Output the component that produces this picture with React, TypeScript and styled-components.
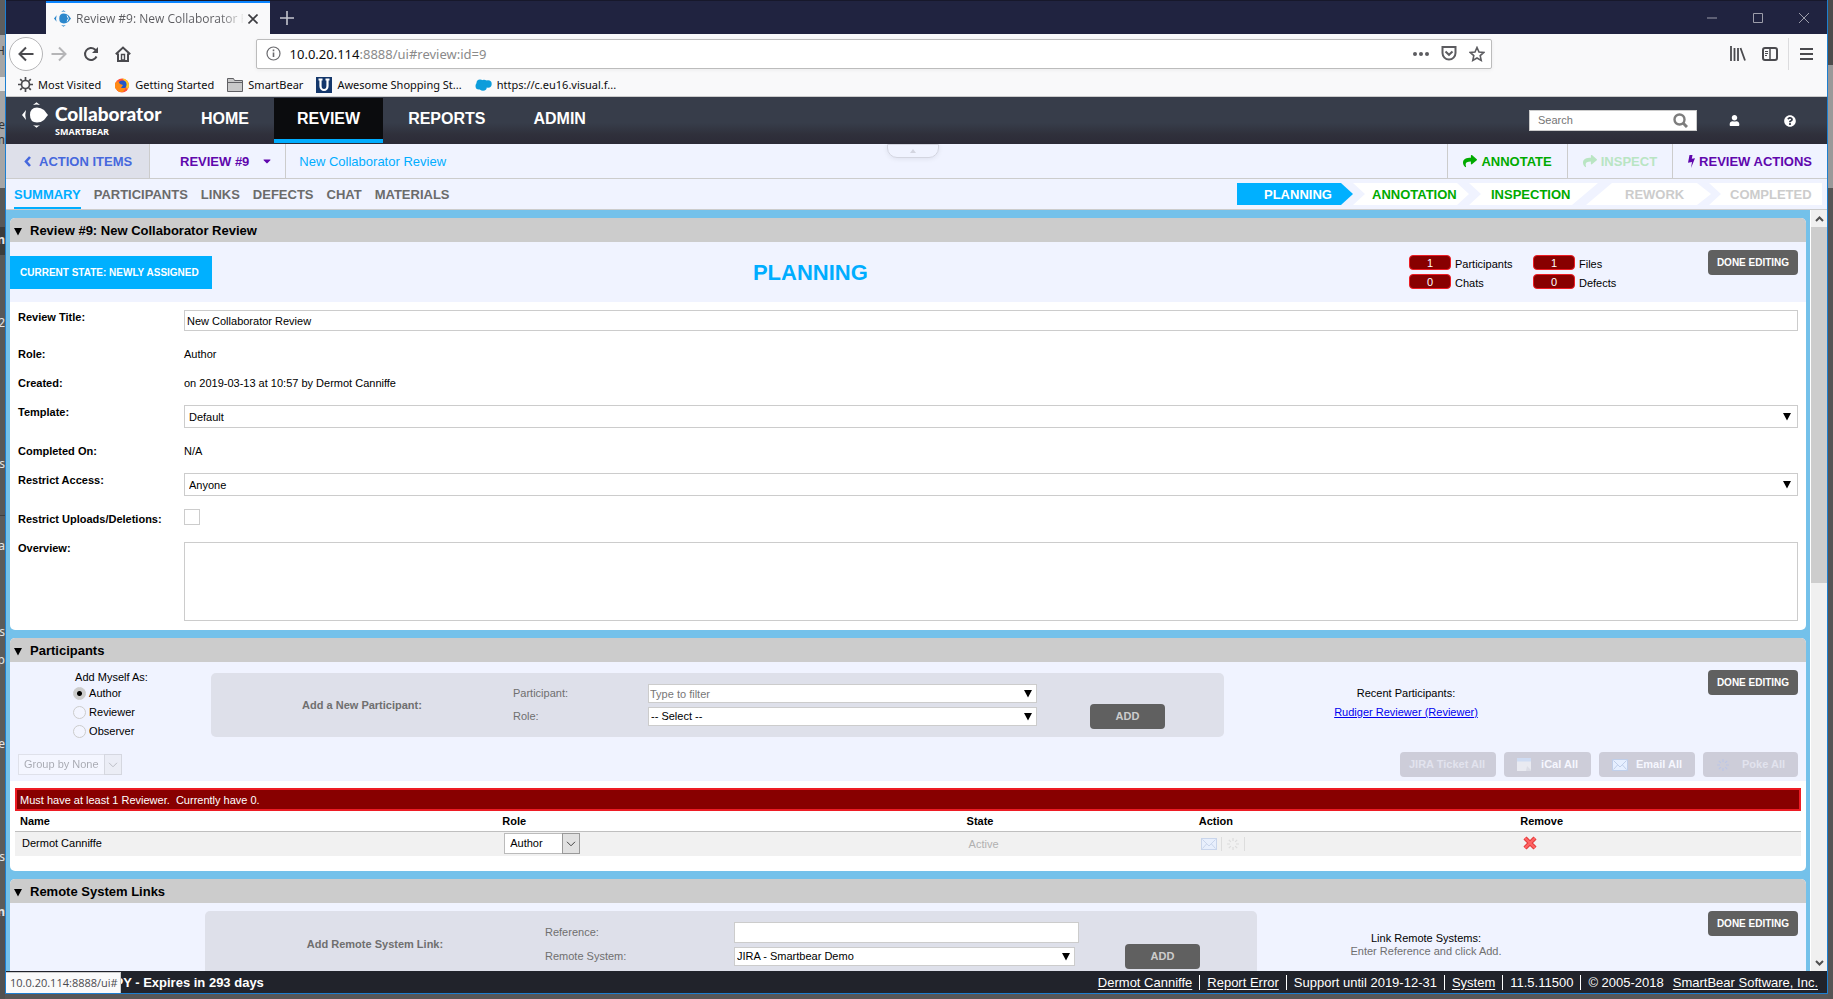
import React from "react";
import styled, { createGlobalStyle, css } from "styled-components";
import { FaShare, FaUser, FaQuestionCircle, FaCaretDown } from "react-icons/fa";

const sans = `"Liberation Sans", Arial, sans-serif`;
const ui = `"Noto Sans", "Open Sans", sans-serif`;

const GlobalStyle = createGlobalStyle`
  * { box-sizing: border-box; }
  body { margin: 0; background: #575757; font: 11px/15px ${sans}; color: #000; }
  button, input, select, textarea { font: inherit; color: inherit; margin: 0; border-radius: 0; }
  h1, h2, h3, p { margin: 0; font-size: inherit; }
  svg { display: block; flex: none; }
`;

/* ---------- desktop and window frame ---------- */

const Desktop = styled.div`
  display: grid;
  grid-template-columns: 5px minmax(0, 1fr) 5px;
  grid-template-rows: minmax(0, 1fr);
  height: 100vh;
  overflow: hidden;
`;

const BackWindow = styled.div`
  position: relative;
  overflow: hidden;
  font: 12px/14px ${ui};
  color: #e4e4e4;
  background: linear-gradient(#5e5e5e 0 35px, #a6a6a6 35px 77px, #e8e8e8 77px 91px, #a6a6a6 91px 188px, #585858 188px 227px, #3c3c3c 227px 255px, #585858 255px 515px, #3f3f3f 515px 516px, #5c5c5c 516px 914px, #444 914px 915px, #515151 915px);
`;

const Fragment = styled.span<{ $dark?: boolean; $bold?: boolean }>`
  position: absolute;
  right: 0;
  white-space: nowrap;
  color: ${(p) => (p.$dark ? "#333" : "#e4e4e4")};
  font-weight: ${(p) => (p.$bold ? 700 : 400)};
`;

const BackEdge = styled.div`
  background: linear-gradient(#4c4c4c 0 65px, #999 65px 188px, #555 188px);
`;

const Window = styled.div`
  display: flex;
  flex-direction: column;
  min-width: 0;
  margin-bottom: 5px;
  border: solid #1d7fd0;
  border-width: 0 1px 1px;
  background: #74c1ea;
  position: relative;
`;

const TabStrip = styled.div`
  display: flex;
  flex: none;
  align-items: stretch;
  height: 34px;
  padding-left: 40px;
  background: #202340;
  border-top: 1px solid #17182b;
`;

const BrowserTab = styled.div`
  display: flex;
  align-items: center;
  gap: 5px;
  width: 224px;
  padding: 0 12px 0 8px;
  background: #f9f9fa;
  border-top: 2px solid #0a84ff;
`;

const TabTitle = styled.span`
  flex: 1;
  overflow: hidden;
  white-space: nowrap;
  font: 12px/18px "Open Sans", sans-serif;
  color: transparent;
  background: linear-gradient(90deg, #5a5a5e 86%, #e8e8e8 100%);
  background-clip: text;
  -webkit-background-clip: text;
`;

const PlainButton = styled.button`
  display: flex;
  align-items: center;
  justify-content: center;
  padding: 0;
  border: 0;
  background: none;
`;

const NewTab = styled(PlainButton)`
  width: 34px;
`;

const WindowButtons = styled.div`
  display: flex;
  margin-left: auto;
`;

const WindowButton = styled(PlainButton)`
  width: 46px;
`;

const NavBar = styled.div`
  display: flex;
  flex: none;
  align-items: center;
  height: 39px;
  padding: 0 3px;
  background: #f9f9fa;
`;

const BackButton = styled(PlainButton)`
  width: 34px;
  height: 34px;
  border: 1px solid #b5b5b7;
  border-radius: 50%;
  background: #fff;
`;

const NavButton = styled(PlainButton)`
  width: 32px;
  height: 32px;
`;

const AddressSide = styled.div`
  flex: 118 1 0;
`;

const AddressBar = styled.div`
  flex: 1235 1 0;
  display: flex;
  align-items: center;
  gap: 9px;
  height: 30px;
  padding: 0 6px 0 9px;
  border: 1px solid #bcbcbc;
  border-radius: 2px;
  background: #fff;
  box-shadow: 0 1px 4px rgba(0, 0, 0, 0.06);
`;

const AddressTools = styled.div`
  display: flex;
  align-items: center;
  gap: 12px;
`;

const Address = styled.span`
  flex: 1;
  font: 13px/18px ${ui};
  color: #8a8a8a;
  b { font-weight: 400; color: #0c0c0d; }
`;

const RightTools = styled.div`
  flex: 336 1 0;
  display: flex;
  justify-content: flex-end;
`;

const MenuButton = styled(NavButton)`
  width: 36px;
  margin-left: 2px;
  border-left: 1px solid #dcdcde;
`;

const Bookmarks = styled.nav`
  display: flex;
  flex: none;
  align-items: center;
  gap: 13px;
  height: 24px;
  padding: 0 12px;
  background: #f9f9fa;
  border-bottom: 1px solid #ccc;
`;

const Bookmark = styled.a`
  display: flex;
  align-items: center;
  gap: 5px;
  font: 11px/18px ${ui};
  color: #0c0c0d;
  text-decoration: none;
`;

/* ---------- application header ---------- */

const Header = styled.header`
  display: flex;
  flex: none;
  align-items: center;
  height: 47px;
  padding-right: 30px;
  background: linear-gradient(#373d4a 55%, #2f303b 80%, #2c2b37);
`;

const Brand = styled.div`
  display: flex;
  align-items: flex-start;
  gap: 7px;
  width: 172px;
  padding-left: 16px;
  color: #fff;
`;

const BrandText = styled.div`
  display: flex;
  flex-direction: column;
  font: 900 19px/20px Lato, sans-serif;
  padding-top: 2px;
`;

const BrandSub = styled.span`
  font: 700 9px/15px "Open Sans", sans-serif;
`;

const MainNav = styled.nav`
  display: flex;
  gap: 2px;
  align-self: stretch;
  padding: 1px 0;
`;

const MainLink = styled.a<{ $active?: boolean }>`
  padding: 0 23px;
  font: 700 16px/41px ${sans};
  color: #fff;
  text-decoration: none;
  border-bottom: 4px solid transparent;
  ${(p) => p.$active && css`background: #0b0c0e; border-color: #00adff;`}
`;

const SearchBox = styled.div`
  display: flex;
  align-items: center;
  width: 168px;
  height: 21px;
  margin-left: auto;
  padding: 0 8px;
  border: 1px solid #ccc;
  background: #fff;
`;

const SearchInput = styled.input`
  flex: 1;
  min-width: 0;
  padding: 0;
  border: 0;
  outline: 0;
  &::placeholder { color: #757575; opacity: 1; }
`;

const HeaderIcon = styled(PlainButton)`
  width: 14px;
  margin-left: 30px;
  color: #fff;
  & + & { margin-left: 42px; }
`;

const ReviewBar = styled.div`
  position: relative;
  display: flex;
  flex: none;
  height: 35px;
  background: #f0f3ff;
  border-bottom: 1px solid #ccc;
  font: 700 13px/35px ${sans};
`;

const ActionItems = styled.a`
  display: flex;
  align-items: center;
  gap: 8px;
  width: 144px;
  padding-left: 18px;
  color: #4668dd;
  background: #dee0ea;
  border-right: 1px solid #ccc;
  text-decoration: none;
`;

const ReviewMenu = styled.button`
  display: flex;
  align-items: center;
  gap: 12px;
  padding: 0 12px 0 30px;
  border: 0;
  border-right: 1px solid #ccc;
  background: none;
  color: #6007ad;
`;

const ReviewName = styled.span`
  padding-left: 13px;
  font-weight: 400;
  color: #00adff;
`;

const Handle = styled(PlainButton)`
  position: absolute;
  top: 0;
  left: 50%;
  width: 52px;
  height: 14px;
  margin-left: -30px;
  border: 1px solid #d3d5e0;
  border-radius: 0 0 10px 10px;
  box-shadow: 0 1px 5px rgba(0, 0, 40, 0.08);
`;

const BarActions = styled.div`
  display: flex;
  margin-left: auto;
`;

const BarAction = styled.button<{ $tone: string }>`
  display: flex;
  align-items: center;
  gap: 4px;
  padding: 0 15px;
  border: 0;
  border-left: 1px solid #ccc;
  background: none;
  color: ${(p) => p.$tone};
`;

const TabsRow = styled.div`
  display: flex;
  flex: none;
  justify-content: space-between;
  height: 31px;
  padding: 0 5px 0 8px;
  background: #f0f3ff;
  border-bottom: 1px solid #ccc;
  font: 700 13px/25px ${sans};
`;

const SectionTabs = styled.nav`
  display: flex;
  gap: 13px;
`;

const SectionTab = styled.a<{ $active?: boolean }>`
  padding-top: 3px;
  color: ${(p) => (p.$active ? "#00adff" : "#6b6b6b")};
  border-bottom: 2px solid ${(p) => (p.$active ? "#00adff" : "transparent")};
  text-decoration: none;
`;

const Steps = styled.ol`
  display: flex;
  margin: 4px 0 0;
  padding: 0;
  list-style: none;
`;

const Step = styled.li<{ $width: number; $pad: number; $bg: string; $fg: string; $shape: string; $overlap?: number }>`
  width: ${(p) => p.$width}px;
  height: 22px;
  margin-left: ${(p) => -(p.$overlap || 0)}px;
  padding-left: ${(p) => p.$pad}px;
  line-height: 23px;
  color: ${(p) => p.$fg};
  background: ${(p) => p.$bg};
  clip-path: polygon(${(p) => p.$shape});
`;

/* ---------- scrolling content ---------- */

const Main = styled.div`
  flex: 1;
  min-height: 0;
  display: flex;
`;

const Panels = styled.main`
  flex: 1;
  min-width: 0;
  display: flex;
  flex-direction: column;
  gap: 8px;
  padding: 8px 4px 0;
  overflow: hidden;
`;

const Panel = styled.section`
  flex: none;
  border-radius: 5px;
  overflow: hidden;
  background: #fff;
`;

const PanelHeader = styled.h2`
  display: flex;
  align-items: center;
  gap: 8px;
  height: 24px;
  padding: 2px 0 0 4px;
  background: #ccc;
  font: 700 13px/22px ${sans};
`;

const ScrollBar = styled.div`
  display: flex;
  flex-direction: column;
  width: 17px;
  background: #f0f0f0;
  border-left: 1px solid #fff;
`;

const ScrollButton = styled(PlainButton)`
  height: 17px;
  flex: none;
`;

const ScrollTrack = styled.div`
  flex: 1;
`;

const ScrollThumb = styled.div`
  height: 49%;
  background: #cdcdcd;
`;

const DarkButton = styled.button<{ $wide?: boolean; $dim?: boolean }>`
  flex: none;
  height: 25px;
  width: ${(p) => (p.$wide ? 90 : 75)}px;
  padding: 0;
  border: 0;
  border-radius: 4px;
  background: #606060;
  color: ${(p) => (p.$dim ? "#ccc" : "#fff")};
  font-size: 10px;
  font-weight: 700;
`;

const SummaryHead = styled.div`
  display: flex;
  align-items: flex-start;
  height: 60px;
  padding: 8px 8px 0 0;
  background: #f0f3ff;
`;

const StateBadge = styled.div`
  margin-top: 6px;
  padding: 0 13px 0 10px;
  background: #00b0ff;
  color: #fff;
  font-size: 10px;
  font-weight: 700;
  line-height: 33px;
`;

const Phase = styled.h3`
  flex: 1;
  margin-top: 6px;
  text-align: center;
  font: 700 22px/33px ${sans};
  color: #00adff;
`;

const Stats = styled.div`
  display: grid;
  grid-template-columns: 124px 175px;
  row-gap: 4px;
  margin-top: 5px;
`;

const Stat = styled.div`
  display: flex;
  gap: 4px;
  height: 15px;
  line-height: 18px;
`;

const StatCount = styled.span`
  width: 42px;
  border: 1px solid #ed1c24;
  border-radius: 4px;
  background: #880000;
  color: #fff;
  text-align: center;
  line-height: 14px;
`;

const Form = styled.div`
  display: grid;
  grid-template-columns: 166px minmax(0, 1fr);
  row-gap: 14px;
  padding: 8px 8px 9px;
`;

const FormLabel = styled.label`
  font-weight: 700;
`;

const FormValue = styled.span``;

const TextInput = styled.input<{ $spaced?: boolean }>`
  width: 100%;
  height: 21px;
  margin-bottom: ${(p) => (p.$spaced ? 2 : 0)}px;
  padding: 0 2px;
  border: 1px solid #ccc;
  background: #fff;
`;

const TextArea = styled.textarea`
  && { margin-top: 1px; }
  display: block;
  width: 100%;
  height: 79px;
  border: 1px solid #ccc;
  resize: none;
`;

const CheckBox = styled.input`
  && { margin: -3px 0 2px; }
  appearance: none;
  width: 16px;
  height: 16px;
  border: 1px solid #ccc;
  background: #fff;
`;

const SelectWrap = styled.div<{ $tall?: boolean; $trim?: boolean }>`
  position: relative;
  height: ${(p) => (p.$tall ? 23 : 19)}px;
  margin-right: ${(p) => (p.$trim ? 4 : 0)}px;
  margin-bottom: ${(p) => (p.$tall ? 2 : 0)}px;
  svg { position: absolute; right: ${(p) => (p.$tall ? 7 : 5)}px; top: ${(p) => (p.$tall ? 7 : 5)}px; pointer-events: none; }
`;

const SelectBox = styled.select<{ $tall?: boolean }>`
  appearance: none;
  display: block;
  width: 100%;
  height: 100%;
  padding: ${(p) => (p.$tall ? "1px 4px 0" : "0 2px")};
  border: 1px solid #ccc;
  background: #fff;
`;

const FilterInput = styled(TextInput)`
  height: 19px;
  display: block;
  padding: 0 1px;
  &::placeholder { color: #777; opacity: 1; }
`;

const ParticipantsHead = styled.div`
  padding: 0 8px 4px 0;
  background: #f0f3ff;
`;

const EditRow = styled.div<{ $cols: string }>`
  display: grid;
  grid-template-columns: ${(p) => p.$cols};
  align-items: start;
  padding-top: 8px;
`;

const RemoteHead = styled.div`
  height: 120px;
  padding-right: 8px;
  background: #f0f3ff;
`;

const RoleChoice = styled.fieldset`
  justify-self: center;
  margin: 0;
  padding: 0;
  border: 0;
`;

const ChoiceTitle = styled.legend`
  padding: 0 0 0 2px;
  line-height: 14px;
`;

const Choice = styled.label`
  display: flex;
  align-items: center;
  gap: 3px;
  height: 19px;
`;

const Radio = styled.input`
  appearance: none;
  width: 13px;
  height: 13px;
  border: 1px solid #ccc;
  border-radius: 50%;
  background: #f3f5ff;
  &:checked { border-color: #ccc; background: radial-gradient(circle, #000 0 2px, #ccc 3px); }
`;

const Inset = styled.div`
  padding-top: 3px;
`;

const AddBox = styled.div<{ $cols: string }>`
  display: grid;
  grid-template-columns: ${(p) => p.$cols};
  padding: 11px 6px 8px 0;
  border-radius: 5px;
  background: #dee0ea;
  color: #6f6f6f;
  ${DarkButton} { place-self: end center; font-size: 11px; }
`;

const AddTitle = styled.h3`
  place-self: center;
  margin-bottom: 3px;
  font-weight: 700;
`;

const AddFields = styled.div<{ $cols: string }>`
  display: grid;
  grid-template-columns: ${(p) => p.$cols};
  align-content: start;
  align-items: center;
  row-gap: 4px;
  margin-bottom: 3px;
  input, select { color: #000; }
`;

const Aside = styled.div<{ $line: number }>`
  padding-top: ${(p) => (p.$line === 19 ? 14 : 21)}px;
  text-align: center;
  line-height: ${(p) => p.$line}px;
  a { color: #0000ee; }
  p + p { color: #6f6f6f; }
`;

const RightCell = styled.div`
  display: flex;
  justify-content: flex-end;
`;

const BulkRow = styled.div`
  display: flex;
  align-items: center;
  gap: 8px;
  padding: 11px 0 0 8px;
`;

const MiniSelectWrap = styled.div<{ $faded?: boolean }>`
  display: inline-block;
  position: relative;
  width: ${(p) => (p.$faded ? 104 : 76)}px;
  height: 21px;
  opacity: ${(p) => (p.$faded ? 0.3 : 1)};
`;

const MiniSelect = styled.select`
  appearance: none;
  display: block;
  width: 100%;
  height: 100%;
  padding: 0 5px;
  border: 1px solid #bbb;
  background: #fff;
  opacity: 1;
`;

const MiniArrow = styled.span`
  position: absolute;
  right: 0;
  top: 0;
  bottom: 0;
  width: 18px;
  display: flex;
  align-items: center;
  justify-content: center;
  border: 1px solid #999;
  background: #e1e1e1;
  pointer-events: none;
`;

const BulkButtons = styled.div`
  display: flex;
  gap: 8px;
  margin-left: auto;
`;

const BulkButton = styled.button<{ $width: number; $bright?: boolean }>`
  display: flex;
  align-items: center;
  justify-content: space-between;
  width: ${(p) => p.$width}px;
  height: 25px;
  padding: 0 ${(p) => (p.$width === 96 && !p.$bright ? 9 : 13)}px;
  border: 0;
  border-radius: 4px;
  background: #cdcdd9;
  color: ${(p) => (p.$bright ? "#f6f7ff" : "#e2e3ee")};
  font-weight: 700;
`;

const TableArea = styled.div`
  padding: 7px 5px 15px;
`;

const Alert = styled.div`
  height: 23px;
  padding: 0 3px;
  border: 2px solid #ed1c24;
  background: #880000;
  color: #fff;
  line-height: 20px;
  white-space: pre;
`;

const Table = styled.table`
  width: 100%;
  table-layout: fixed;
  border-collapse: collapse;
  th { height: 20px; padding: 2px 5px 0; text-align: left; border-bottom: 1px solid #bfbfbf; }
  td { height: 25px; padding: 0 7px; background: #f1f1f1; }
  td > * { vertical-align: middle; }
`;

const Col = styled.col<{ $w: number }>`
  width: ${(p) => p.$w}%;
`;

const Muted = styled.span`
  color: #b0b0b0;
`;

const RowActions = styled.div`
  display: flex;
  align-items: center;
  gap: 4px;
`;

const Divider = styled.i`
  width: 1px;
  height: 14px;
  background: #ddd;
`;

const Footer = styled.footer`
  display: flex;
  flex: none;
  justify-content: space-between;
  height: 22px;
  padding: 0 9px 0 89px;
  background: #21232b;
  color: #fff;
  font: 13px/23px ${sans};
  a { color: #fff; text-underline-offset: 2px; }
`;

const FooterList = styled.div`
  display: flex;
  align-items: center;
  gap: 7px;
  a:last-child { margin-left: 2px; }
`;

const Bar = styled.i`
  width: 1px;
  height: 15px;
  background: #fff;
`;

const StatusTip = styled.div`
  position: absolute;
  left: 0;
  bottom: 0;
  width: 115px;
  padding-left: 4px;
  border: solid #ccc;
  border-width: 1px 1px 0 0;
  background: #fafafa;
  color: #4a4a4f;
  font: 11px/20px "Open Sans", sans-serif;
`;

/* ---------- drawings ---------- */

const Down = () => (
  <svg width="8" height="9" viewBox="0 0 8 9"><path d="M0 1h8L4 8.500z" fill="#000" /></svg>
);
const Chev = () => (
  <svg width="10" height="6" viewBox="0 0 10 6"><path d="M1 .8l4 4 4-4" fill="none" stroke="#444" /></svg>
);
const BearMark = ({ size, fill, hole }: { size: number; fill: string; hole?: string }) => (
  <svg width={size} height={size} viewBox="0 0 26 26">
    <path d="M8 13Q8 5.500 15 5.500q4 0 7 2.500l4 5-4 5q-3 2.500-7 2.500Q8 20.500 8 13z" fill={fill} />
    <path d="M4 8Q2.500 13 4 18L0 13z M11 3L14.500 .3 18 3Q14.500 1.800 11 3z M11 23l3.500 2.700L18 23q-3.500 1.200-7 0z" fill={fill} />
    {hole && <path d="M20 8.500q4 4.500 0 9" fill="none" stroke={hole} strokeWidth="1.500" />}
  </svg>
);
const Envelope = ({ faint }: { faint?: boolean }) => (
  <svg width="16" height="12" viewBox="0 0 16 12" opacity={faint ? 0.8 : 1}>
    <rect x=".5" y=".5" width="15" height="11" fill="#e6efff" stroke="#c0cfea" />
    <path d="M1.500 1.500L8 8l6.500-6.500M1.500 10.500l4-4.500M14.500 10.500l-4-4.500" fill="none" stroke="#c0cfea" />
  </svg>
);
const Spark = ({ color }: { color: string }) => (
  <svg width="14" height="14" viewBox="0 0 14 14" stroke={color} strokeWidth="1.200">
    <path d="M7 1v3M7 10v3M1 7h3M10 7h3M2.800 2.800l2 2M9.200 9.200l2 2M11.200 2.800l-2 2M4.800 9.200l-2 2" />
  </svg>
);
const CalendarIcon = () => (
  <svg width="14" height="13" viewBox="0 0 14 13">
    <path d="M0 0h14v13H0z" fill="#e9eaf1" /><path d="M0 0h14v3.500H0z" fill="#cfdcf3" /><path d="M10 8l4 4v1h-5z" fill="#dcdde6" />
  </svg>
);
const Magnifier = () => (
  <svg width="15" height="15" viewBox="0 0 15 15" fill="none" stroke="#7d7d7d">
    <circle cx="6.500" cy="6.500" r="5" strokeWidth="2.400" /><path d="M10 10l4 4" strokeWidth="3" />
  </svg>
);
const LeftChevron = () => (
  <svg width="7" height="11" viewBox="0 0 7 11"><path d="M6 1L2 5.500 6 10" fill="none" stroke="#4668dd" strokeWidth="2.600" /></svg>
);
const Bolt = () => (
  <svg width="7" height="13" viewBox="0 0 7 13"><path d="M1.500 0h3L3.800 3.800 7 3.200 3 13l1-6L0 7.800z" fill="#6007ad" /></svg>
);
const stroke = { fill: "none", stroke: "#4a4a4e", strokeWidth: 2 } as const;

/* ---------- page ---------- */

const fragments: [number, string, boolean?, boolean?][] = [
  [44, "H", true], [118, "e", true], [133, "m", true], [233, "n", false, true], [316, "2"], [457, "ns"],
  [539, "a"], [625, "ss"], [653, "ep"], [737, "e"], [850, "ns"], [905, "on", false, true],
];

const Choices = ({ id, value, tall, trim }: { id: string; value: string; tall?: boolean; trim?: boolean }) => (
  <SelectWrap $tall={tall} $trim={trim}>
    <SelectBox id={id} $tall={tall}><option>{value}</option></SelectBox>
    <Down />
  </SelectWrap>
);

const SmallSelect = ({ label, value, faded }: { label: string; value: string; faded?: boolean }) => (
  <MiniSelectWrap $faded={faded}>
    <MiniSelect aria-label={label}><option>{value}</option></MiniSelect>
    <MiniArrow><Chev /></MiniArrow>
  </MiniSelectWrap>
);

const Chrome = () => (
  <>
    <TabStrip>
      <BrowserTab>
        <BearMark size={17} fill="#2b87cc" hole="#f9f9fa" />
        <TabTitle>Review #9: New Collaborator Review</TabTitle>
        <PlainButton aria-label="Close tab">
          <svg width="10" height="10" viewBox="0 0 10 10"><path d="M.5.5l9 9M9.500.5l-9 9" stroke="#3c3c40" strokeWidth="1.600" /></svg>
        </PlainButton>
      </BrowserTab>
      <NewTab aria-label="New tab">
        <svg width="14" height="14" viewBox="0 0 14 14"><path d="M7 0v14M0 7h14" stroke="#c4c5ce" strokeWidth="1.600" /></svg>
      </NewTab>
      <WindowButtons>
        <WindowButton aria-label="Minimize"><svg width="10" height="10" viewBox="0 0 10 10"><path d="M0 5h10" stroke="#9c9daa" /></svg></WindowButton>
        <WindowButton aria-label="Maximize"><svg width="10" height="10" viewBox="0 0 10 10"><path d="M.5.5h9v9h-9z" fill="none" stroke="#9c9daa" /></svg></WindowButton>
        <WindowButton aria-label="Close"><svg width="10" height="10" viewBox="0 0 10 10"><path d="M0 0l10 10M10 0L0 10" stroke="#9c9daa" /></svg></WindowButton>
      </WindowButtons>
    </TabStrip>
    <NavBar>
      <BackButton aria-label="Back"><svg width="16" height="16" viewBox="0 0 16 16" {...stroke}><path d="M15.500 8H2M8 1.500L1.500 8 8 14.500" /></svg></BackButton>
      <NavButton aria-label="Forward"><svg width="16" height="16" viewBox="0 0 16 16" {...stroke} stroke="#b5b5b7"><path d="M.5 8H14M8 1.500L14.500 8 8 14.500" /></svg></NavButton>
      <NavButton aria-label="Reload">
        <svg width="16" height="16" viewBox="0 0 16 16" {...stroke}><path d="M13.500 10.500A6 6 0 1 1 12 3.500l1.500 1.500" /><path d="M15 1v6H9z" fill="#4a4a4e" stroke="none" /></svg>
      </NavButton>
      <NavButton aria-label="Home">
        <svg width="16" height="16" viewBox="0 0 16 16" {...stroke}><path d="M.8 8.200L8 1.500l7.200 6.700M3 7.500V15h10V7.500" /><path d="M6.500 8.500h3V14h-3z" strokeWidth="1.400" /></svg>
      </NavButton>
      <AddressSide />
      <AddressBar>
        <svg width="15" height="15" viewBox="0 0 15 15"><circle cx="7.500" cy="7.500" r="6.500" fill="none" stroke="#6a6a6e" strokeWidth="1.200" /><path d="M7.500 6.500V11M7.500 3.600v1.700" stroke="#6a6a6e" strokeWidth="1.600" /></svg>
        <Address><b>10.0.20.114</b>:8888/ui#review:id=9</Address>
        <AddressTools>
          <svg width="16" height="4" viewBox="0 0 16 4" fill="#5c5c60"><circle cx="2" cy="2" r="2" /><circle cx="8" cy="2" r="2" /><circle cx="14" cy="2" r="2" /></svg>
          <svg width="16" height="15" viewBox="0 0 16 15" {...stroke} stroke="#5c5c60"><path d="M1.500 1h13v6a6.500 6.500 0 0 1-13 0z" /><path d="M4.500 5.500L8 8.800l3.500-3.300" /></svg>
          <svg width="16" height="16" viewBox="0 0 16 16" {...stroke} stroke="#5c5c60" strokeWidth="1.600"><path d="M8 1.500l2 4.500 4.800.4-3.600 3.200 1 4.800L8 12l-4.200 2.400 1-4.800L1.200 6.400 6 6z" /></svg>
        </AddressTools>
      </AddressBar>
      <RightTools>
        <NavButton aria-label="Library"><svg width="16" height="15" viewBox="0 0 16 15" {...stroke} strokeWidth="1.800"><path d="M1 0v15M4.500 2v13M8 2v13M10.500 2L15 14.500" /></svg></NavButton>
        <NavButton aria-label="Sidebars"><svg width="16" height="14" viewBox="0 0 16 14" {...stroke}><rect x="1" y="1" width="14" height="12" rx="2" /><path d="M8 1v12" strokeWidth="1.500" /><path d="M3 4.500h3M3 6.500h3M3 8.500h2" strokeWidth="1" /></svg></NavButton>
        <MenuButton aria-label="Menu"><svg width="13" height="12" viewBox="0 0 13 12" {...stroke}><path d="M0 1h13M0 6h13M0 11h13" /></svg></MenuButton>
      </RightTools>
    </NavBar>
    <Bookmarks>
      <Bookmark href="#most">
        <svg width="15" height="15" viewBox="0 0 15 15" {...stroke}><circle cx="7.500" cy="7.500" r="4" strokeWidth="1.700" /><path d="M7.500 0v3M7.500 12v3M0 7.500h3M12 7.500h3M2.200 2.200l2 2M10.800 10.800l2 2M12.800 2.200l-2 2M4.200 10.800l-2 2" strokeWidth="1.700" /></svg>
        Most Visited
      </Bookmark>
      <Bookmark href="#start">
        <svg width="16" height="16" viewBox="0 0 16 16"><circle cx="8" cy="8.500" r="7" fill="#ff4f3a" /><path d="M8 1.500a7 7 0 0 1 7 8l-2 3-3-9z" fill="#ffc91f" /><circle cx="8.500" cy="7.500" r="4" fill="#2257c8" /><path d="M1 6l3-2 2 3 3 1-2 3 5 0-3 4H5L1 11z" fill="#ff8a16" /></svg>
        Getting Started
      </Bookmark>
      <Bookmark href="#bear">
        <svg width="16" height="14" viewBox="0 0 16 14"><path d="M.5 13.500V.5h6l1 2h8v11z" fill="#c9c9c9" stroke="#606064" /><path d="M1 4.500h14" stroke="#606064" /></svg>
        SmartBear
      </Bookmark>
      <Bookmark href="#shop">
        <svg width="16" height="16" viewBox="0 0 16 16"><path d="M0 0h16v16H0z" fill="#14376b" /><path d="M2.500 2.500h4M9.500 2.500h4M4.500 2.500V9a3.500 4 0 0 0 7 0V2.500" fill="none" stroke="#fff" strokeWidth="2.200" /></svg>
        Awesome Shopping St...
      </Bookmark>
      <Bookmark href="#visual">
        <svg width="17" height="12" viewBox="0 0 17 12" fill="#0d9ddb"><circle cx="5" cy="4" r="3.500" /><circle cx="4" cy="7" r="3.500" /><circle cx="9" cy="4" r="3.200" /><circle cx="13" cy="5" r="3.700" /><circle cx="8" cy="8" r="3.800" /></svg>
        https://c.eu16.visual.f...
      </Bookmark>
    </Bookmarks>
  </>
);

const notch = "0 0, calc(100% - 12px) 0, 100% 50%, calc(100% - 12px) 100%, 0 100%";

const AppHeader = () => (
  <>
    <Header>
      <Brand>
        <BearMark size={26} fill="#fff" />
        <BrandText>Collaborator<BrandSub>SMARTBEAR</BrandSub></BrandText>
      </Brand>
      <MainNav>
        <MainLink href="#home">HOME</MainLink>
        <MainLink href="#review" $active>REVIEW</MainLink>
        <MainLink href="#reports">REPORTS</MainLink>
        <MainLink href="#admin">ADMIN</MainLink>
      </MainNav>
      <SearchBox><SearchInput aria-label="Search" placeholder="Search" /><Magnifier /></SearchBox>
      <HeaderIcon aria-label="User"><FaUser size={11} /></HeaderIcon>
      <HeaderIcon aria-label="Help"><FaQuestionCircle size={12} /></HeaderIcon>
    </Header>
    <ReviewBar>
      <ActionItems href="#items"><LeftChevron />ACTION ITEMS</ActionItems>
      <ReviewMenu>REVIEW #9<FaCaretDown size={12} /></ReviewMenu>
      <ReviewName>New Collaborator Review</ReviewName>
      <Handle aria-label="Collapse header"><svg width="6" height="4" viewBox="0 0 6 4"><path d="M0 4h6L3 0z" fill="#d3d5e0" /></svg></Handle>
      <BarActions>
        <BarAction $tone="#00aa00"><FaShare size={14} />ANNOTATE</BarAction>
        <BarAction $tone="#b9e5c3"><FaShare size={14} />INSPECT</BarAction>
        <BarAction $tone="#6007ad"><Bolt />REVIEW ACTIONS</BarAction>
      </BarActions>
    </ReviewBar>
    <TabsRow>
      <SectionTabs>
        {["SUMMARY", "PARTICIPANTS", "LINKS", "DEFECTS", "CHAT", "MATERIALS"].map((t, i) => (
          <SectionTab key={t} href={"#" + t.toLowerCase()} $active={i === 0}>{t}</SectionTab>
        ))}
      </SectionTabs>
      <Steps>
        <Step $width={116} $pad={27} $bg="#00b0ff" $fg="#fff" $shape={notch}>PLANNING</Step>
        <Step $width={116} $pad={19} $bg="#fff" $fg="#00aa00" $shape={notch + ", 12px 50%"}>ANNOTATION</Step>
        <Step $width={129} $pad={22} $bg="#fff" $fg="#00aa00" $shape="0 0, 100% 0, calc(100% - 26px) 100%, 0 100%, 12px 50%">INSPECTION</Step>
        <Step $width={125} $pad={39} $overlap={12} $bg="#fff" $fg="#ccc" $shape="26px 0, calc(100% - 14px) 0, 100% 50%, calc(100% - 14px) 100%, 0 100%">REWORK</Step>
        <Step $width={113} $pad={21} $overlap={2} $bg="#fff" $fg="#ccc" $shape="0 0, 100% 0, 100% 100%, 0 100%, 12px 50%">COMPLETED</Step>
      </Steps>
    </TabsRow>
  </>
);

const SummaryPanel = () => (
  <Panel>
    <PanelHeader><Down />Review #9: New Collaborator Review</PanelHeader>
    <SummaryHead>
      <StateBadge>CURRENT STATE: NEWLY ASSIGNED</StateBadge>
      <Phase>PLANNING</Phase>
      <Stats>
        <Stat><StatCount>1</StatCount>Participants</Stat>
        <Stat><StatCount>1</StatCount>Files</Stat>
        <Stat><StatCount>0</StatCount>Chats</Stat>
        <Stat><StatCount>0</StatCount>Defects</Stat>
      </Stats>
      <DarkButton $wide>DONE EDITING</DarkButton>
    </SummaryHead>
    <Form>
      <FormLabel htmlFor="title">Review Title:</FormLabel>
      <TextInput id="title" $spaced defaultValue="New Collaborator Review" />
      <FormLabel as="span">Role:</FormLabel>
      <FormValue>Author</FormValue>
      <FormLabel as="span">Created:</FormLabel>
      <FormValue>on 2019-03-13 at 10:57 by Dermot Canniffe</FormValue>
      <FormLabel htmlFor="template">Template:</FormLabel>
      <Choices id="template" tall value="Default" />
      <FormLabel as="span">Completed On:</FormLabel>
      <FormValue>N/A</FormValue>
      <FormLabel htmlFor="access">Restrict Access:</FormLabel>
      <Choices id="access" tall value="Anyone" />
      <FormLabel htmlFor="uploads">Restrict Uploads/Deletions:</FormLabel>
      <CheckBox id="uploads" type="checkbox" />
      <FormLabel htmlFor="overview">Overview:</FormLabel>
      <TextArea id="overview" />
    </Form>
  </Panel>
);

const ParticipantsPanel = () => (
  <Panel>
    <PanelHeader><Down />Participants</PanelHeader>
    <ParticipantsHead>
      <EditRow $cols="201fr 1013fr 364fr 210fr">
        <RoleChoice>
          <ChoiceTitle>Add Myself As:</ChoiceTitle>
          <Choice><Radio type="radio" name="me" defaultChecked />Author</Choice>
          <Choice><Radio type="radio" name="me" />Reviewer</Choice>
          <Choice><Radio type="radio" name="me" />Observer</Choice>
        </RoleChoice>
        <Inset>
          <AddBox $cols="302fr 524fr 181fr">
            <AddTitle>Add a New Participant:</AddTitle>
            <AddFields $cols="135fr 389fr">
              <label htmlFor="participant">Participant:</label>
              <SelectWrap><FilterInput id="participant" placeholder="Type to filter" /><Down /></SelectWrap>
              <label htmlFor="role">Role:</label>
              <Choices id="role" value="-- Select --" />
            </AddFields>
            <DarkButton $dim>ADD</DarkButton>
          </AddBox>
        </Inset>
        <Aside $line={19}>
          <p>Recent Participants:</p>
          <a href="#rudiger">Rudiger Reviewer (Reviewer)</a>
        </Aside>
        <RightCell><DarkButton $wide>DONE EDITING</DarkButton></RightCell>
      </EditRow>
      <BulkRow>
        <SmallSelect label="Group by" value="Group by None" faded />
        <BulkButtons>
          <BulkButton $width={96}>JIRA Ticket All</BulkButton>
          <BulkButton $width={87} $bright><CalendarIcon />iCal All</BulkButton>
          <BulkButton $width={96} $bright><Envelope />Email All</BulkButton>
          <BulkButton $width={95}><Spark color="#bcc6e6" />Poke All</BulkButton>
        </BulkButtons>
      </BulkRow>
    </ParticipantsHead>
    <TableArea>
      <Alert>{"Must have at least 1 Reviewer.  Currently have 0."}</Alert>
      <Table>
        <colgroup><Col $w={27} /><Col $w={26} /><Col $w={13} /><Col $w={18} /><Col $w={16} /></colgroup>
        <thead><tr><th>Name</th><th>Role</th><th>State</th><th>Action</th><th>Remove</th></tr></thead>
        <tbody>
          <tr>
            <td>Dermot Canniffe</td>
            <td><SmallSelect label="Role of Dermot Canniffe" value="Author" /></td>
            <td><Muted>Active</Muted></td>
            <td><RowActions><Envelope faint /><Divider /><Spark color="#dcdcdc" /><Divider /></RowActions></td>
            <td>
              <PlainButton aria-label="Remove">
                <svg width="16" height="16" viewBox="0 0 16 16"><path d="M3 2l10 10M13 2L3 12" stroke="#e23a3a" strokeWidth="4.400" /><path d="M3 2l10 10M13 2L3 12" stroke="#ff6464" strokeWidth="2.400" /></svg>
              </PlainButton>
            </td>
          </tr>
        </tbody>
      </Table>
    </TableArea>
  </Panel>
);

const RemotePanel = () => (
  <Panel>
    <PanelHeader><Down />Remote System Links</PanelHeader>
    <RemoteHead>
      <EditRow $cols="195fr 1052fr 338fr 203fr">
        <span />
        <AddBox $cols="340fr 534fr 167fr 5fr">
          <AddTitle>Add Remote System Link:</AddTitle>
          <AddFields $cols="189fr 345fr">
            <label htmlFor="reference">Reference:</label>
            <TextInput id="reference" />
            <label htmlFor="system">Remote System:</label>
            <Choices id="system" trim value="JIRA - Smartbear Demo" />
          </AddFields>
          <DarkButton $dim>ADD</DarkButton>
        </AddBox>
        <Aside $line={13}>
          <p>Link Remote Systems:</p>
          <p>Enter Reference and click Add.</p>
        </Aside>
        <RightCell><DarkButton $wide>DONE EDITING</DarkButton></RightCell>
      </EditRow>
    </RemoteHead>
  </Panel>
);

export default function App() {
  return (
    <>
      <GlobalStyle />
      <Desktop>
        <BackWindow>
          {fragments.map(([top, text, dark, bold]) => (
            <Fragment key={top} $dark={dark} $bold={bold} style={{ top }}>{text}</Fragment>
          ))}
        </BackWindow>
        <Window>
          <Chrome />
          <AppHeader />
          <Main>
            <Panels>
              <SummaryPanel />
              <ParticipantsPanel />
              <RemotePanel />
            </Panels>
            <ScrollBar>
              <ScrollButton aria-label="Scroll up"><svg width="9" height="6" viewBox="0 0 9 6"><path d="M1 5l3.500-3.500L8 5" fill="none" stroke="#505050" strokeWidth="2" /></svg></ScrollButton>
              <ScrollTrack><ScrollThumb /></ScrollTrack>
              <ScrollButton aria-label="Scroll down"><svg width="9" height="6" viewBox="0 0 9 6"><path d="M1 1l3.500 3.500L8 1" fill="none" stroke="#505050" strokeWidth="2" /></svg></ScrollButton>
            </ScrollBar>
          </Main>
          <Footer>
            <b>COPY - Expires in 293 days</b>
            <FooterList>
              <a href="#user">Dermot Canniffe</a><Bar />
              <a href="#error">Report Error</a><Bar />
              <span>Support until 2019-12-31</span><Bar />
              <a href="#system">System</a><Bar />
              <span>11.5.11500</span><Bar />
              <span>© 2005-2018</span>
              <a href="#smartbear">SmartBear Software, Inc.</a>
            </FooterList>
          </Footer>
          <StatusTip>10.0.20.114:8888/ui#</StatusTip>
        </Window>
        <BackEdge />
      </Desktop>
    </>
  );
}
